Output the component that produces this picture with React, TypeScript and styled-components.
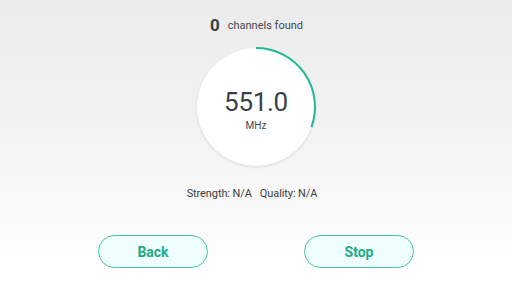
import React from "react";
import styled, { createGlobalStyle } from "styled-components";

const Global = createGlobalStyle`
  html, body { margin: 0; padding: 0; }
  body { width: 512px; height: 288px; overflow: hidden; font-family: Roboto, "Noto Sans", sans-serif; }
`;

const Page = styled.div`
  width: 512px;
  height: 288px;
  box-sizing: border-box;
  background: linear-gradient(to bottom, #ebebeb 0%, #f4f4f4 50%, #ffffff 92%);
  display: flex;
  flex-direction: column;
  align-items: center;
  padding-top: 15px;
`;

const Header = styled.div`
  height: 20px;
  display: flex;
  align-items: center;
  gap: 8px;
  color: #3c4247;
  margin-left: 1px;
`;

const Count = styled.span`
  font-size: 17px;
  font-weight: 700;
  color: #3a4045;
`;

const Label = styled.span`
  font-size: 11px;
  color: #44494d;
`;

const Dial = styled.div`
  position: relative;
  margin-top: 13px;
  width: 118px;
  height: 118px;
  border-radius: 50%;
  background: #ffffff;
  box-shadow: 0 1px 3px rgba(0, 0, 0, 0.12);
  display: flex;
  flex-direction: column;
  align-items: center;
  justify-content: center;
`;

const Arc = styled.svg`
  position: absolute;
  left: -3px;
  top: -3px;
  width: 124px;
  height: 124px;
  overflow: visible;
`;

const Freq = styled.div`
  font-size: 26px;
  color: #3a4147;
  line-height: 28px;
  margin-top: 6px;
  letter-spacing: -0.3px;
`;

const Unit = styled.div`
  font-size: 10px;
  color: #42474b;
  line-height: 14px;
  margin-top: 3px;
`;

const Stats = styled.div`
  margin-top: 21px;
  margin-right: 8px;
  font-size: 11px;
  line-height: 14px;
  color: #3b3f43;
  display: flex;
  gap: 8px;
  letter-spacing: -0.1px;
`;

const Buttons = styled.div`
  margin-top: 34px;
  display: flex;
  gap: 96px;
`;

const Button = styled.button`
  width: 110px;
  height: 33px;
  border-radius: 17px;
  border: 1px solid #4cc3a9;
  background: #effffd;
  color: #1faa8b;
  font-family: Roboto, sans-serif;
  font-size: 14px;
  font-weight: 700;
  padding: 0;
`;

export default function App() {
  const r = 59;
  const c = 62;
  const a = (110 * Math.PI) / 180;
  const ex = c + r * Math.sin(a);
  const ey = c - r * Math.cos(a);
  return (
    <>
      <Global />
      <Page>
        <Header>
          <Count>0</Count>
          <Label>channels found</Label>
        </Header>
        <Dial>
          <Arc viewBox="0 0 124 124">
            <path
              d={`M ${c} ${c - r} A ${r} ${r} 0 0 1 ${ex} ${ey}`}
              fill="none"
              stroke="#22b996"
              strokeWidth="2"
            />
          </Arc>
          <Freq>551.0</Freq>
          <Unit>MHz</Unit>
        </Dial>
        <Stats>
          <span>Strength: N/A</span>
          <span>Quality: N/A</span>
        </Stats>
        <Buttons>
          <Button>Back</Button>
          <Button>Stop</Button>
        </Buttons>
      </Page>
    </>
  );
}
